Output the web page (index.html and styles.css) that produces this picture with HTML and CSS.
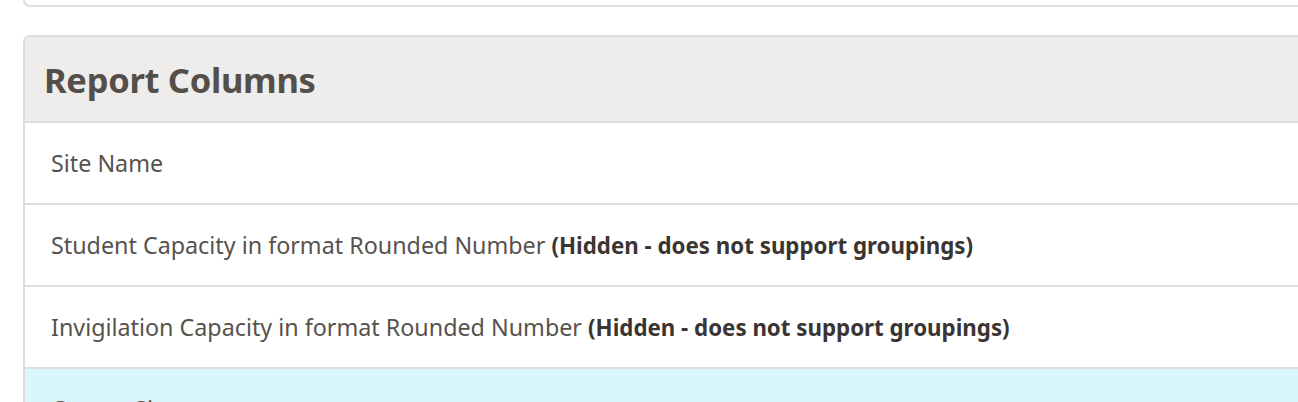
FILE: index.html
```html
<!DOCTYPE html>
<html>
<head>
<meta charset="utf-8">
<link rel="stylesheet" href="styles.css">
</head>
<body>
<div class="page">
  <div class="prev-card"></div>
  <section class="panel">
    <header class="panel-head"><h2>Report Columns</h2></header>
    <ul class="rows">
      <li class="row">Site Name</li>
      <li class="row">Student Capacity in format Rounded Number <b>(Hidden - does not support groupings)</b></li>
      <li class="row">Invigilation Capacity in format Rounded Number <b>(Hidden - does not support groupings)</b></li>
      <li class="row row-active">Course Size</li>
    </ul>
  </section>
</div>
</body>
</html>
```
FILE: styles.css
```css
html, body {
  margin: 0;
  padding: 0;
  background: #fff;
  overflow: hidden;
}
body {
  font-family: "Noto Sans", "Open Sans", sans-serif;
  color: #57524d;
}
.page {
  padding: 0 0 0 23px;
  margin-right: -40px;
}
.prev-card {
  height: 6px;
  margin-top: -1px;
  border: 2px solid #dddddd;
  border-top: none;
  border-radius: 0 0 7px 7px;
  margin-bottom: 28px;
}
.panel {
  border: 2px solid #dddddd;
  border-radius: 7px 7px 0 0;
  overflow: hidden;
}
.panel-head {
  background: #eeedeb;
  height: 84px;
  display: flex;
  align-items: center;
  padding: 0 19px;
  border-bottom: 2px solid #dddddd;
}
.panel-head h2 {
  margin: 0;
  font-size: 34.5px;
  font-weight: 700;
  color: #544f4a;
  letter-spacing: -0.3px;
}
.rows {
  list-style: none;
  margin: 0;
  padding: 0;
}
.row {
  height: 80px;
  display: flex;
  align-items: center;
  padding: 0 26px;
  font-size: 23.3px;
  border-top: 2px solid #dddddd;
  white-space: pre;
}
.rows .row:first-child {
  border-top: none;
}
.row b {
  color: #3a3532;
  font-weight: 700;
  font-size: 22.3px;
}
.row-active {
  background: #d8f6fb;
}
```
